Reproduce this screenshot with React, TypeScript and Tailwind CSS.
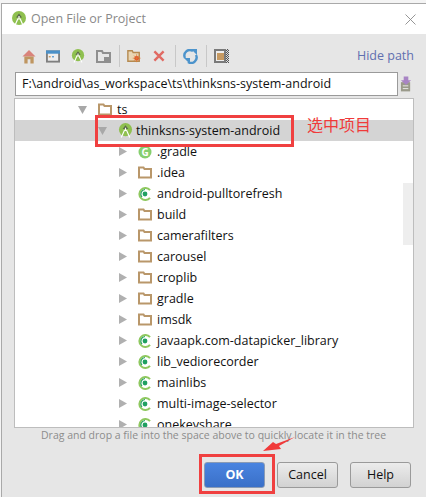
const font = { fontFamily: '"Open Sans", "Noto Sans CJK SC", sans-serif' }

function AndroidIcon({ size = 15 }: { size?: number }) {
  return (
    <svg width={size} height={size} viewBox="0 0 16 16" className="shrink-0">
      <circle cx="8" cy="7" r="7" fill="#8fc04f" />
      <path d="M8 2.5 L5 6.5 H11 Z" fill="#59664a" />
      <path d="M8 5 V8.5 M7 7.5 L3.5 15.5 M9 7.5 L12.5 15.5" stroke="#fff" strokeWidth="1.2" fill="none" />
    </svg>
  )
}

function FolderIcon() {
  return (
    <svg width="14" height="13" viewBox="0 0 14 13" className="shrink-0">
      <path d="M1 11.5 V1.5 H5.5 L6.5 3 H13 V11.5 Z" fill="#fff" stroke="#b9976a" strokeWidth="2" />
    </svg>
  )
}

function ModuleIcon() {
  return (
    <svg width="14" height="14" viewBox="0 0 14 14" className="shrink-0">
      <path d="M12 3.2 A6 6 0 1 0 12 10.8" fill="none" stroke="#8fc85f" strokeWidth="2" />
      <circle cx="7" cy="7" r="2.4" fill="#1fa060" />
      <path d="M7 2.5 A4.5 4.5 0 0 0 4 10" fill="none" stroke="#1fa060" strokeWidth="1.2" />
    </svg>
  )
}

function GradleIcon() {
  return (
    <svg width="14" height="14" viewBox="0 0 14 14" className="shrink-0">
      <circle cx="7" cy="7" r="6.5" fill="#86cf6e" />
      <text x="3.4" y="10.6" fontSize="10" fontWeight="700" fill="#fff" style={font}>G</text>
    </svg>
  )
}

function Arrow({ open }: { open?: boolean }) {
  return open ? (
    <svg width="9" height="8" viewBox="0 0 9 8" className="shrink-0"><path d="M0 0 H9 L4.5 8 Z" fill="#a8a8a8" /></svg>
  ) : (
    <svg width="8" height="9" viewBox="0 0 8 9" className="shrink-0"><path d="M0 0 V9 L8 4.5 Z" fill="#b0b0b0" /></svg>
  )
}

function Row({ name, icon }: { name: string; icon: 'folder' | 'module' | 'gradle' }) {
  return (
    <div className="flex h-[21px] items-center pl-[104px]">
      <Arrow />
      <div className="ml-[11px] flex w-[19px]">
        {icon === 'folder' && <FolderIcon />}
        {icon === 'module' && <ModuleIcon />}
        {icon === 'gradle' && <GradleIcon />}
      </div>
      <span className="pt-[2px] text-[12.5px] text-[#111]">{name}</span>
    </div>
  )
}

const rows: { name: string; icon: 'folder' | 'module' | 'gradle' }[] = [
  { name: '.gradle', icon: 'gradle' },
  { name: '.idea', icon: 'folder' },
  { name: 'android-pulltorefresh', icon: 'module' },
  { name: 'build', icon: 'folder' },
  { name: 'camerafilters', icon: 'folder' },
  { name: 'carousel', icon: 'folder' },
  { name: 'croplib', icon: 'folder' },
  { name: 'gradle', icon: 'folder' },
  { name: 'imsdk', icon: 'folder' },
  { name: 'javaapk.com-datapicker_library', icon: 'module' },
  { name: 'lib_vediorecorder', icon: 'module' },
  { name: 'mainlibs', icon: 'module' },
  { name: 'multi-image-selector', icon: 'module' },
  { name: 'onekeyshare', icon: 'module' },
]

function Toolbar() {
  return (
    <div className="flex h-[38px] items-center pl-[20px] pr-[12px] pt-[6px]">
      <svg width="14" height="15" viewBox="0 0 15 16" className="mr-[10px] shrink-0">
        <path d="M0.5 8 L7.5 1 L14.5 8 Z" fill="#d9837b" />
        <path d="M2.5 8 H12.5 V15.5 H9 V11 H6 V15.5 H2.5 Z" fill="#bf9661" />
      </svg>
      <svg width="14" height="13" viewBox="0 0 15 13" className="mr-[11px] shrink-0">
        <rect x="1" y="1" width="13" height="11" fill="#eee" stroke="#7f7f7f" strokeWidth="2" />
        <rect x="0" y="0" width="15" height="3.5" fill="#4a90c8" />
        <rect x="3" y="6" width="2" height="1.5" fill="#c9975a" />
        <rect x="6.5" y="6" width="2" height="1.5" fill="#5a9ad0" />
      </svg>
      <div className="mr-[11px]"><AndroidIcon size={14} /></div>
      <svg width="15" height="13" viewBox="0 0 15 13" className="shrink-0">
        <path d="M1 12 V1 H6 L7 3 H14 V12 Z" fill="#e6e6e6" stroke="#8f8f8f" strokeWidth="2" />
        <rect x="8" y="7" width="7" height="6" fill="#8f8f8f" />
      </svg>
      <div className="ml-[8px] mr-[7px] h-[22px] w-px bg-[#c8c8c8]" />
      <svg width="14" height="14" viewBox="0 0 16 14" className="mr-[12px] shrink-0">
        <path d="M1 13 V1 H6 L7 3 H14 V13 Z" fill="#e9d6b4" stroke="#b58a50" strokeWidth="1.6" />
        <circle cx="11" cy="9.5" r="2.6" fill="#d8452e" />
        <path d="M11 5 V14 M6.5 9.5 H15.5 M8 6.5 L14 12.5 M14 6.5 L8 12.5" stroke="#e4792f" strokeWidth="0.8" />
      </svg>
      <svg width="12" height="12" viewBox="0 0 13 13" className="mr-[10px] shrink-0">
        <path d="M1.5 1.5 L11.5 11.5 M11.5 1.5 L1.5 11.5" stroke="#e06a63" strokeWidth="2.6" />
      </svg>
      <div className="mr-[7px] h-[22px] w-px bg-[#c8c8c8]" />
      <svg width="15" height="15" viewBox="0 0 15 15" className="shrink-0">
        <path d="M2 9 A5.5 5.5 0 0 1 10 2 M13 6 A5.5 5.5 0 0 1 5 13" fill="none" stroke="#4d94cc" strokeWidth="2.4" />
        <path d="M8 0 H14 V6 Z M1 9 H7 V15 Z" fill="#4d94cc" />
      </svg>
      <div className="ml-[8px] mr-[7px] h-[22px] w-px bg-[#c8c8c8]" />
      <div className="flex h-[14px] w-[15px] items-center bg-[repeating-conic-gradient(#555_0_25%,#ddd_0_50%)] bg-[length:2px_2px]">
        <div className="flex h-[14px] w-[12px] items-center justify-center border-2 border-[#7a7a7a] bg-[#eee]">
          <div className="h-[7px] w-[7px] bg-[#c79a62]" />
        </div>
      </div>
      <span className="ml-auto text-[12.5px] text-[#5f6fb0]">Hide path</span>
    </div>
  )
}

function Annotations() {
  return (
    <>
      <div className="absolute left-[95px] top-[115px] h-[32px] w-[199px] border-[3px] border-[#f04040]" />
      <span className="absolute left-[307px] top-[113px] text-[16px] text-[#f03a3a]">选中项目</span>
      <div className="absolute left-[199px] top-[454px] h-[40px] w-[76px] border-[3px] border-[#f04040]" />
      <svg width="40" height="20" viewBox="0 0 40 20" className="absolute left-[262px] top-[435px]">
        <path d="M1 16 L11 7 L14 9 L33 2 L17 11 L19 14 Z" fill="#f03a3a" />
      </svg>
    </>
  )
}

export default function App() {
  return (
    <div className="relative h-[497px] w-[426px] overflow-hidden bg-[#f4f4f4] pl-[1px] pt-[3px]" style={font}>
      <div className="flex h-[494px] w-[425px] flex-col border-l border-t border-[#a9a9a9] bg-[#e6e6e6]">
        <div className="flex h-[30px] shrink-0 items-center bg-white pl-[9px] pr-[10px]">
          <AndroidIcon size={16} />
          <span className="ml-[4px] text-[12.5px] text-[#8a8a8a]">Open File or Project</span>
          <svg width="11" height="11" viewBox="0 0 11 11" className="ml-auto">
            <path d="M0.5 0.5 L10.5 10.5 M10.5 0.5 L0.5 10.5" stroke="#8a8a8a" strokeWidth="0.9" />
          </svg>
        </div>

        <Toolbar />

        <div className="flex h-[24px] shrink-0 items-center pl-[13px]">
          <div className="flex h-[24px] w-[383px] items-center border border-[#9a9a9a] bg-white pl-[6px] text-[12.5px] text-[#111]">
            F:\android\as_workspace\ts\thinksns-system-android
          </div>
          <svg width="12" height="16" viewBox="0 0 13 16" className="ml-[2px]">
            <rect x="1" y="6" width="10" height="10" fill="#9a9a8a" />
            <path d="M3 10 H9 M3 13 H9" stroke="#eee" strokeWidth="1" />
            <path d="M4 0 H9 V4 H12 L6.5 9 L1 4 H4 Z" fill="#a884c4" />
          </svg>
        </div>

        <div className="ml-[12px] mt-[2px] h-[330px] w-[400px] shrink-0 overflow-hidden border border-[#bdbdbd] bg-white">
          <div className="relative">
            <div className="flex h-[21px] items-center pl-[63px]">
              <Arrow open />
              <div className="ml-[11px] flex w-[19px]"><FolderIcon /></div>
              <span className="pt-[2px] text-[12.5px] text-[#111]">ts</span>
            </div>
            <div className="flex h-[21px] items-center bg-[#d4d4d4] pl-[83px]">
              <Arrow open />
              <div className="ml-[11px] flex w-[18px]"><AndroidIcon size={15} /></div>
              <span className="pt-[2px] text-[12.5px] text-[#111]">thinksns-system-android</span>
            </div>
            {rows.map((r) => (
              <Row key={r.name} name={r.name} icon={r.icon} />
            ))}
            <div className="absolute left-[388px] top-[84px] h-[62px] w-[10px] bg-[#eeeeee]" />
          </div>
        </div>

        <p className="pl-[39px] text-[10.5px] leading-[14px] text-[#8c8c8c]">
          Drag and drop a file into the space above to quickly locate it in the tree
        </p>

        <div className="mt-[20px] flex justify-end gap-[12px] pr-[15px]">
          <button className="h-[26px] w-[61px] rounded-[3px] border border-[#8a9bb5] bg-linear-to-b from-[#4a84e0] to-[#3a70c8] text-[12.5px] font-bold text-white">OK</button>
          <button className="h-[26px] w-[61px] rounded-[3px] border border-[#9a9a9a] bg-linear-to-b from-[#ececec] to-[#d2d2d2] text-[12.5px] text-[#111]">Cancel</button>
          <button className="h-[26px] w-[61px] rounded-[3px] border border-[#9a9a9a] bg-linear-to-b from-[#ececec] to-[#d2d2d2] text-[12.5px] text-[#111]">Help</button>
        </div>
      </div>
      <Annotations />
    </div>
  )
}
